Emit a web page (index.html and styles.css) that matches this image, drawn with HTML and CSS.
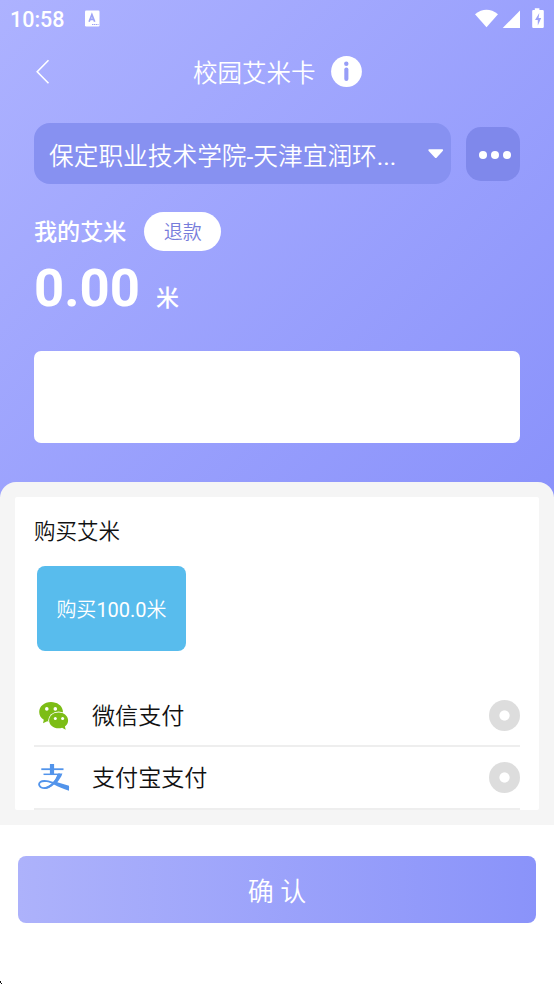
FILE: index.html
```
<!DOCTYPE html>
<html lang="zh-CN">
<head>
<meta charset="utf-8">
<title>校园艾米卡</title>
<link rel="stylesheet" href="styles.css">
</head>
<body>
<main class="screen">
  <section class="hero">
    <div class="status">
      <span class="clock">10:58</span>
      <svg class="app-badge" width="15" height="17" viewBox="0 0 15 17"><rect x="0" y="0.5" width="14.5" height="16" rx="1.2" fill="#fff"/><path d="M4.100 11.800 6.900 4.600 9.700 11.800M5.200 9.300H8.600" fill="none" stroke="#9da3f6" stroke-width="1.700"/><path d="M7 14.500H13.500" stroke="#9da3f6" stroke-width="1" stroke-dasharray="1.400 .5"/></svg>
      <svg class="signals" width="72" height="22" viewBox="0 0 72 22" fill="#fff"><path d="M1 6.200Q12.500-2.500 24 6.200L12.500 19.300Z"/><path d="M46 2.500V20H28.700Z"/><path d="M60.800.2h4.600v1.700h3.200q1.200 0 1.200 1.200v15.700q0 1.200-1.200 1.200h-9.200q-1.200 0-1.200-1.200V3.100q0-1.200 1.200-1.200h1.400z"/><path d="M65.300 5 61 12h2.800v5.500L67.200 10h-2.600z" fill="#9da3f8"/></svg>
    </div>
    <header class="titlebar">
      <svg class="back" width="14" height="26" viewBox="0 0 14 26"><path d="M12.500 1.200 1.200 12.700 12.500 24.300" fill="none" stroke="#fff" stroke-width="1.600"/></svg>
      <h1 class="title">校园艾米卡</h1>
      <svg class="info" width="31" height="31" viewBox="0 0 31 31"><circle cx="15.500" cy="15.500" r="15.400" fill="#fff"/><circle cx="15.300" cy="7.700" r="2.200" fill="#979df7"/><rect x="13.300" y="11.500" width="4.100" height="13.500" rx="2" fill="#979df7"/></svg>
    </header>
    <div class="picker-row">
      <div class="picker"><span class="school">保定职业技术学院<b>-</b>天津宜润环<b>...</b></span><svg width="16" height="10" viewBox="0 0 16 10"><path d="M1.300.3h12.900q1.500.3.500 1.600L8.800 8.600q-1 1-2 0L.7 1.900Q-.3.600 1.300.3z" fill="#fff"/></svg></div>
      <div class="more"><i></i><i></i><i></i></div>
    </div>
    <div class="balance-head"><h2 class="label">我的艾米</h2><span class="refund">退款</span></div>
    <div class="balance"><span class="amount">0.00</span><span class="unit">米</span></div>
    <div class="banner"></div>
  </section>
  <section class="sheet">
    <div class="card">
      <h2 class="card-title">购买艾米</h2>
      <div class="product">购买<b>100.0</b>米</div>
      <div class="pay-list">
        <div class="pay">
          <svg class="pay-icon" width="32" height="30" viewBox="0 0 32 30"><path d="M13 1C6.300 1 1.200 5.400 1.200 11c0 3.200 1.700 6 4.600 7.800L5 22.300l4.200-2.100c1.500.4 3 .6 4.700.5C24 20 25.500 14 24.800 9.500 24 4.500 19 1 13 1z" fill="#7cbd16"/><ellipse cx="20.600" cy="19.500" rx="10.400" ry="8.900" fill="#fff"/><path d="M20.600 11.600c5.300 0 9.500 3.400 9.500 7.800 0 2.500-1.300 4.600-3.200 6l.8 3.400-3.600-2c-1.100.4-2.300.5-3.500.5-5.300 0-9.500-3.500-9.500-7.900s4.200-7.800 9.500-7.800z" fill="#7cbd16"/><g fill="#fff"><circle cx="8.800" cy="7.900" r="1.800"/><circle cx="17.300" cy="7.900" r="1.800"/><circle cx="17.300" cy="17.400" r="1.500"/><circle cx="24.600" cy="17.400" r="1.500"/></g></svg>
          <span class="pay-name">微信支付</span><span class="radio"></span>
        </div>
        <div class="pay">
          <svg class="pay-icon" width="32" height="30" viewBox="0 0 32 30" fill="none" stroke="#5294eb"><path d="M14 1V11" stroke-width="4.200"/><path d="M3.300 6.200H25.500" stroke-width="1.800"/><path d="M5.500 11.300H22" stroke-width="1.500"/><path d="M20.500 11.500C18.500 17.500 12.500 25 6.500 25.200 1.500 25.300-.2 21 2.300 19.100 7 15.800 15 20.500 31 25" stroke-width="1.800"/><path d="M20.200 10.600h4.200c-1 3.400-3 6-5.100 8.600L31 22.800V27.800C25 26 20.500 23.800 16 21.600 12.500 24.600 9.500 26 6 26.100V24.500C12 23.500 18 18 20.200 10.600z" fill="#5294eb" stroke="none"/></svg>
          <span class="pay-name">支付宝支付</span><span class="radio"></span>
        </div>
      </div>
    </div>
  </section>
  <footer class="footer">
    <button class="confirm">确 认</button>
    <svg class="corner" width="3" height="4" viewBox="0 0 3 4"><path d="M0 1h1v2H0zM1 3h1v1H1z" fill="#111"/></svg>
  </footer>
</main>
</body>
</html>
```
FILE: styles.css
```
* { box-sizing: border-box; }
body { margin: 0; font-family: Roboto, "Noto Sans CJK SC", sans-serif; font-weight: 350; background: #fff; }
h1, h2 { margin: 0; font-weight: 350; }
b { font-weight: 400; }
svg { display: block; flex: none; }
.screen { width: 554px; height: 984px; overflow: hidden; display: flex; flex-direction: column; }
.hero { height: 497px; flex: none; padding: 0 34px; color: #fff; background: linear-gradient(135deg, #adb2ff 0%, #8a92fb 100%); }
.status { height: 38px; margin: 0 -24px; display: flex; align-items: center; }
.clock { width: 75px; font-size: 21.500px; font-weight: 500; }
.app-badge { margin-bottom: 2px; }
.signals { margin-left: auto; margin-right: -2px; margin-bottom: 1px; }
.titlebar { height: 67px; display: flex; align-items: center; }
.back { margin-left: 2px; }
.title { margin-left: 143px; padding-top: 4px; font-size: 24.500px; line-height: 36px; width: 123px; white-space: nowrap; }
.info { margin-left: 15px; }
.picker-row { margin-top: 18px; display: flex; align-items: center; gap: 15px; }
.picker { width: 417px; height: 61px; border-radius: 16px; background: #8791f1; display: flex; align-items: center; justify-content: space-between; padding: 0 7px 0 15px; }
.school { padding-top: 7px; font-size: 24.700px; line-height: 36px; white-space: nowrap; }
.more { width: 54px; height: 54px; margin-top: 1px; padding: 2px 0 0 3px; border-radius: 15px; background: #7f88eb; display: flex; align-items: center; justify-content: center; gap: 4px; }
.more i { width: 8px; height: 8px; border-radius: 50%; background: #fff; }
.balance-head { height: 39px; margin-top: 28px; display: flex; align-items: center; gap: 18px; }
.label { padding-bottom: 3px; font-size: 23.100px; font-weight: 500; }
.refund { width: 77px; height: 39px; border-radius: 20px; background: #fff; color: #777ddb; font-size: 19px; line-height: 41px; text-align: center; }
.balance { height: 74px; display: flex; align-items: baseline; gap: 16px; line-height: 74px; }
.amount { font-size: 52.700px; font-weight: 700; }
.unit { font-size: 23px; font-weight: 500; }
.banner { height: 92px; margin-top: 26px; border-radius: 7px; background: #fff; }
.sheet { height: 343px; flex: none; margin-top: -15px; padding: 15px; background: #f5f5f5; border-radius: 16px 16px 0 0; }
.card { height: 313px; padding: 15px 19px 0; background: #fff; border-radius: 2px; }
.card-title { padding-top: 1px; font-size: 21.500px; line-height: 38px; color: #111; }
.product { width: 149px; height: 85px; margin: 15px 0 0 3px; border-radius: 8px; background: #58bced; color: #fff; font-size: 20px; line-height: 88px; text-align: center; }
.pay-list { margin-top: 35px; }
.pay { height: 61px; display: flex; align-items: center; border-bottom: 2px solid #eee; }
.pay:last-child { height: 63px; }
.pay-icon { margin-left: 4px; }
.pay-name { margin-left: 22px; padding-bottom: 3px; font-size: 23.100px; color: #111; }
.radio { width: 31px; height: 31px; margin-left: auto; border-radius: 50%; background: radial-gradient(circle, #fff 4.700px, #ddd 5.500px); }
.footer { flex: 1; padding: 31px 18px 0; display: flex; flex-direction: column; justify-content: space-between; }
.confirm { height: 67px; padding: 0 0 1px; border: 0; border-radius: 8px; background: linear-gradient(90deg, #adb2fb, #8a93fa); color: #fff; font: 350 26px Roboto, "Noto Sans CJK SC", sans-serif; }
.corner { margin-left: -18px; }
```
